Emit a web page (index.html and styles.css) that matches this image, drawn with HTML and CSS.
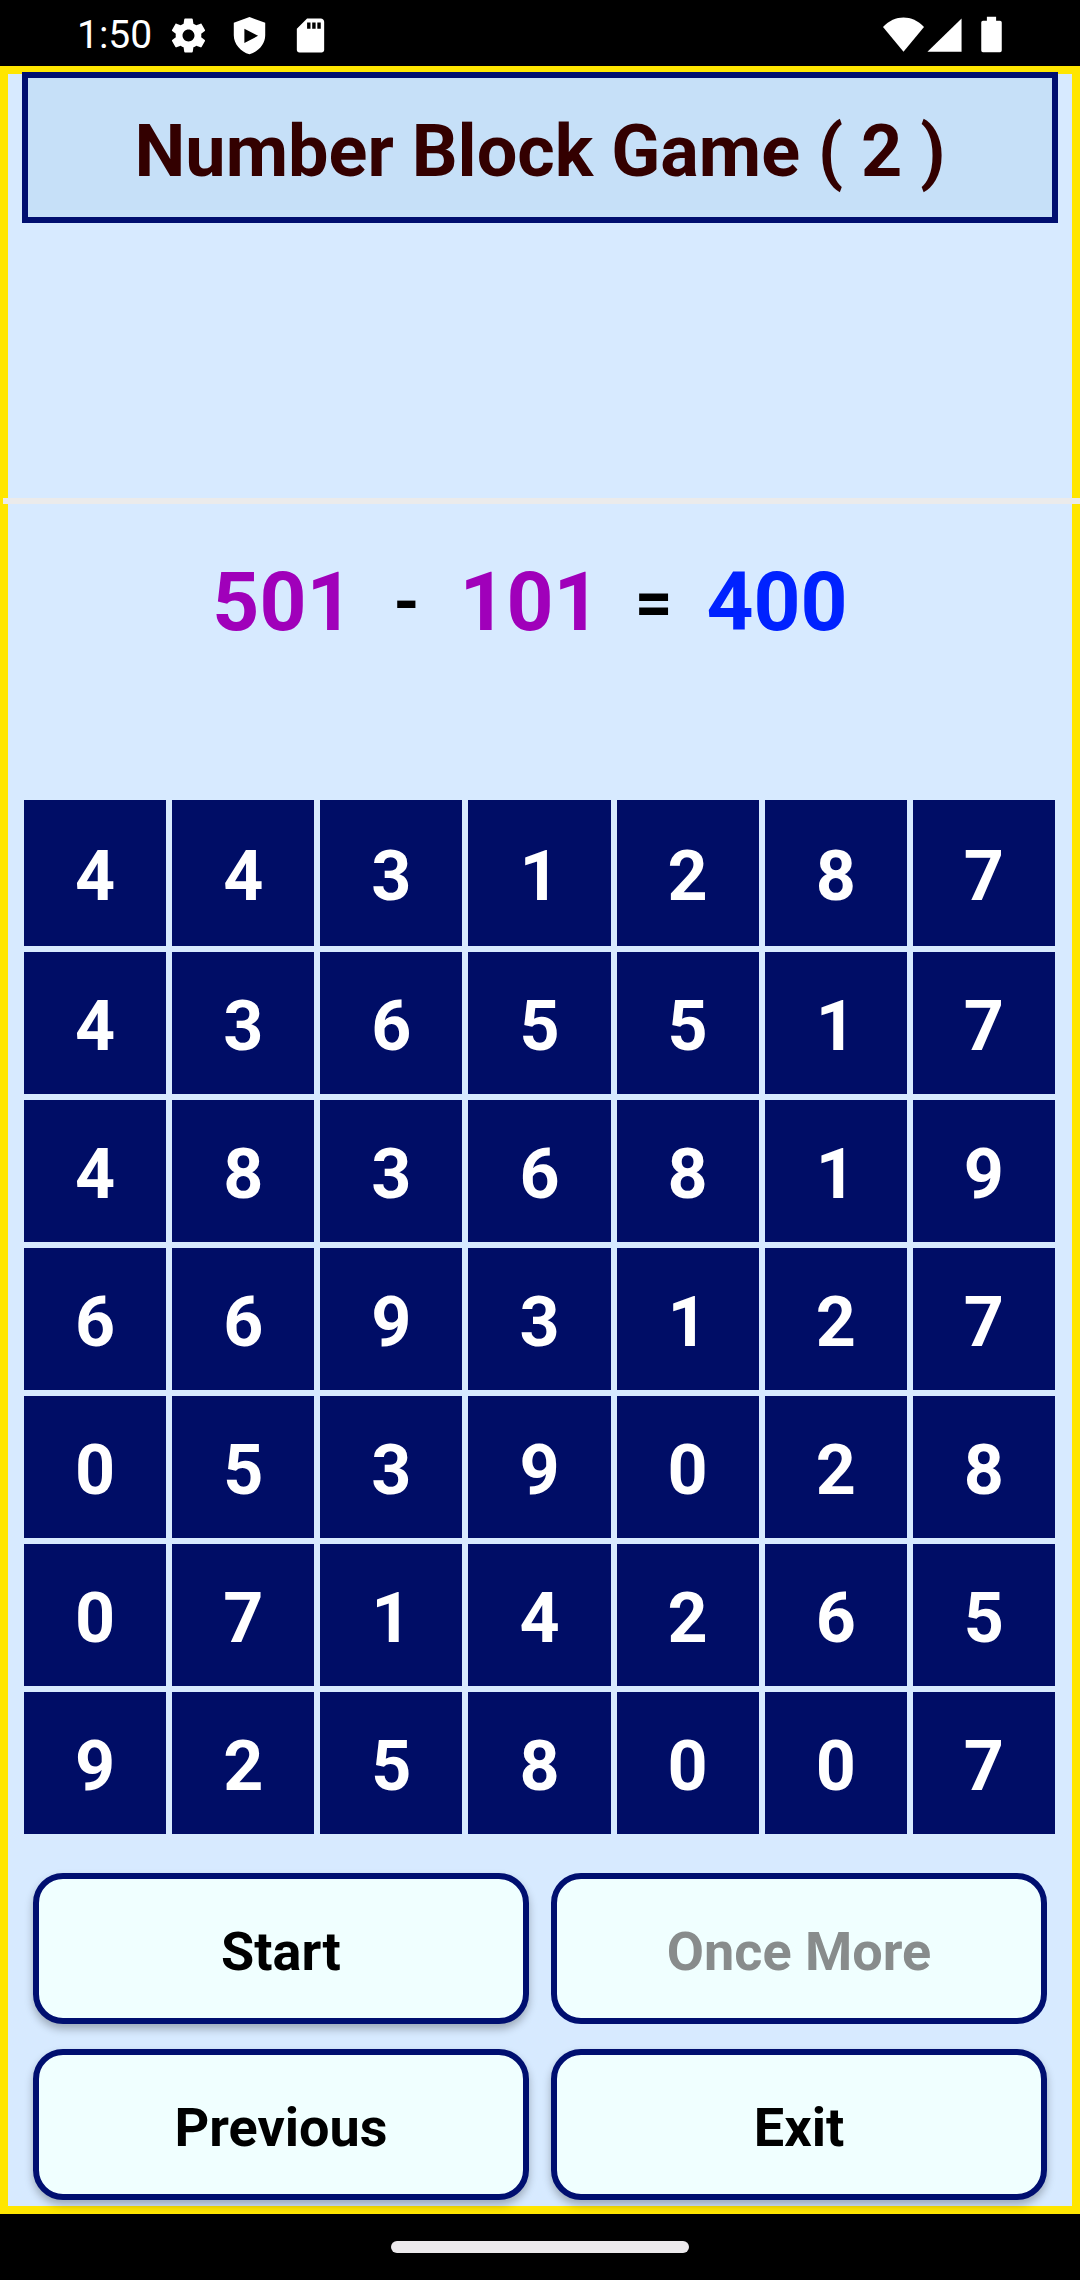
FILE: index.html
```html
<!DOCTYPE html>
<html lang="en">
<head>
  <meta charset="UTF-8">
  <meta name="viewport" content="width=device-width, initial-scale=1.0">
  <title>Number Block Game</title>
  <link rel="stylesheet" href="styles.css">
</head>
<body>
  <div class="status-bar">
    <span class="clock">1:50</span>
    <div class="status-icons">
      <svg viewBox="0 0 24 24"><path d="M19.43 12.98c.04-.32.07-.64.07-.98s-.03-.66-.07-.98l2.11-1.65c.19-.15.24-.42.12-.64l-2-3.46c-.12-.22-.39-.3-.61-.22l-2.49 1c-.52-.4-1.08-.73-1.69-.98l-.38-2.65C14.46 2.18 14.25 2 14 2h-4c-.25 0-.46.18-.49.42l-.38 2.65c-.61.25-1.17.59-1.69.98l-2.49-1c-.23-.09-.49 0-.61.22l-2 3.46c-.13.22-.07.49.12.64l2.11 1.65c-.04.32-.07.65-.07.98s.03.66.07.98l-2.11 1.65c-.19.15-.24.42-.12.64l2 3.46c.12.22.39.3.61.22l2.49-1c.52.4 1.08.73 1.69.98l.38 2.65c.03.24.24.42.49.42h4c.25 0 .46-.18.49-.42l.38-2.65c.61-.25 1.17-.59 1.69-.98l2.49 1c.23.09.49 0 .61-.22l2-3.46c.12-.22.07-.49-.12-.64l-2.11-1.65zM12 15.5c-1.93 0-3.5-1.57-3.5-3.5s1.57-3.5 3.5-3.5 3.5 1.57 3.5 3.5-1.57 3.5-3.5 3.5z"/></svg>
      <svg viewBox="0 0 24 24"><path d="M12 1.2 2.8 4.6v7.2c0 5.2 4 9.6 9.2 11.2 5.2-1.6 9.2-6 9.2-11.2V4.6zM9 8l8 4.2-8 4.2z" fill-rule="evenodd"/></svg>
      <svg viewBox="0 0 24 24"><path d="M18 2h-8L4 8v12.5c0 .8.7 1.5 1.5 1.5h13c.8 0 1.500-.7 1.500-1.500V4c0-1.100-.9-2-2-2zM12 8h-2V4.400h2zm3 0h-2V4.400h2zm3 0h-2V4.400h2z"/></svg>
    </div>
    <div class="system-icons">
      <svg viewBox="0 0 24 24"><path d="M12 21.5 0 7C7-.3 17-.3 24 7z"/></svg>
      <svg viewBox="0 0 24 24"><path d="M2 21.5h20V2z"/></svg>
      <svg class="battery" viewBox="0 0 24 24"><path d="M9.300 1h5.400v2.400H17a1 1 0 0 1 1 1v16.400a1 1 0 0 1-1 1H7a1 1 0 0 1-1-1V4.400a1 1 0 0 1 1-1h2.300z"/></svg>
    </div>
  </div>

  <main class="game">
    <h1>Number Block Game ( 2 )</h1>

    <div class="message"></div>
    <hr>

    <div class="equation">
      <span class="operand">501</span>
      <span class="sign">-</span>
      <span class="operand">101</span>
      <span class="sign equals">=</span>
      <span class="result">400</span>
    </div>

    <div class="board" id="board"></div>

    <div class="controls">
      <button type="button">Start</button>
      <button type="button" disabled>Once More</button>
      <button type="button">Previous</button>
      <button type="button">Exit</button>
    </div>
  </main>

  <div class="nav-bar"><div class="handle"></div></div>

  <script>
    const rows = ["4431287", "4365517", "4836819", "6693127", "0539028", "0714265", "9258007"];
    const board = document.getElementById("board");

    // one button per number block
    rows.join("").split("").forEach(function (digit) {
      const block = document.createElement("button");
      block.type = "button";
      block.textContent = digit;
      board.appendChild(block);
    });
  </script>
</body>
</html>
```

FILE: styles.css
```css
* {
  margin: 0;
  padding: 0;
  box-sizing: border-box;
  font-family: Roboto, "Liberation Sans", sans-serif;
}

body {
  display: flex;
  flex-direction: column;
  min-height: 100vh;
  background: #000;
}

/* status bar */
.status-bar {
  display: flex;
  align-items: center;
  gap: 16px;
  height: 66px;
  padding: 4px 68px 0 77px;
  color: #fff;
}

.clock {
  font-size: 39px;
}

.status-icons,
.system-icons {
  display: flex;
}

.status-icons {
  gap: 20px;
}

.system-icons {
  margin-left: auto;
}

.status-bar svg {
  width: 41px;
  height: 41px;
  fill: #fff;
}

.status-bar .battery {
  margin-left: 6px;
}

/* game screen */
.game {
  flex: 1;
  background: #d7eaff;
  border: 8px solid #ffe600;
  padding: 0 14px 6px;
}

h1 {
  margin-top: -2px;
  padding-top: 8px;
  border: 6px solid #000f70;
  background: #c6e0f8;
  color: #330000;
  font-size: 72px;
  line-height: 131px;
  text-align: center;
}

.message {
  height: 275px;
}

/* the line runs over the yellow frame */
hr {
  height: 6px;
  margin: 0 -22px 0 -19px;
  border: none;
  background: #ebebeb;
}

.equation {
  display: flex;
  justify-content: center;
  align-items: center;
  gap: 40px;
  height: 296px;
  padding: 0 20px 100px 0;
  font-size: 82px;
  font-weight: bold;
}

.operand {
  color: #a000ba;
}

.sign {
  color: #000;
  font-size: 66px;
}

.equals {
  margin: 0 -6px;
}

.result {
  color: #0022ff;
}

.board {
  display: grid;
  grid-template-columns: repeat(7, 1fr);
  grid-template-rows: 146px;
  grid-auto-rows: 142px;
  gap: 6px;
  margin: 0 3px 0 2px;
}

.board button {
  padding-top: 6px;
  border: none;
  background: #000d66;
  color: #fff;
  font-size: 70px;
  font-weight: bold;
}

.controls {
  display: grid;
  grid-template-columns: 1fr 1fr;
  grid-auto-rows: 151px;
  gap: 25px 22px;
  padding: 39px 11px 0;
}

.controls button {
  padding-top: 6px;
  border: 6px solid #000f70;
  border-radius: 30px;
  background: #f0ffff;
  color: #000;
  font-size: 54px;
  font-weight: bold;
  box-shadow: 0 5px 9px rgba(0, 0, 0, 0.28);
}

.controls button:disabled {
  color: #888c8c;
  box-shadow: none;
}

/* gesture bar */
.nav-bar {
  display: flex;
  justify-content: center;
  align-items: center;
  height: 66px;
}

.handle {
  width: 298px;
  height: 12px;
  border-radius: 6px;
  background: #ece9ec;
}
```
